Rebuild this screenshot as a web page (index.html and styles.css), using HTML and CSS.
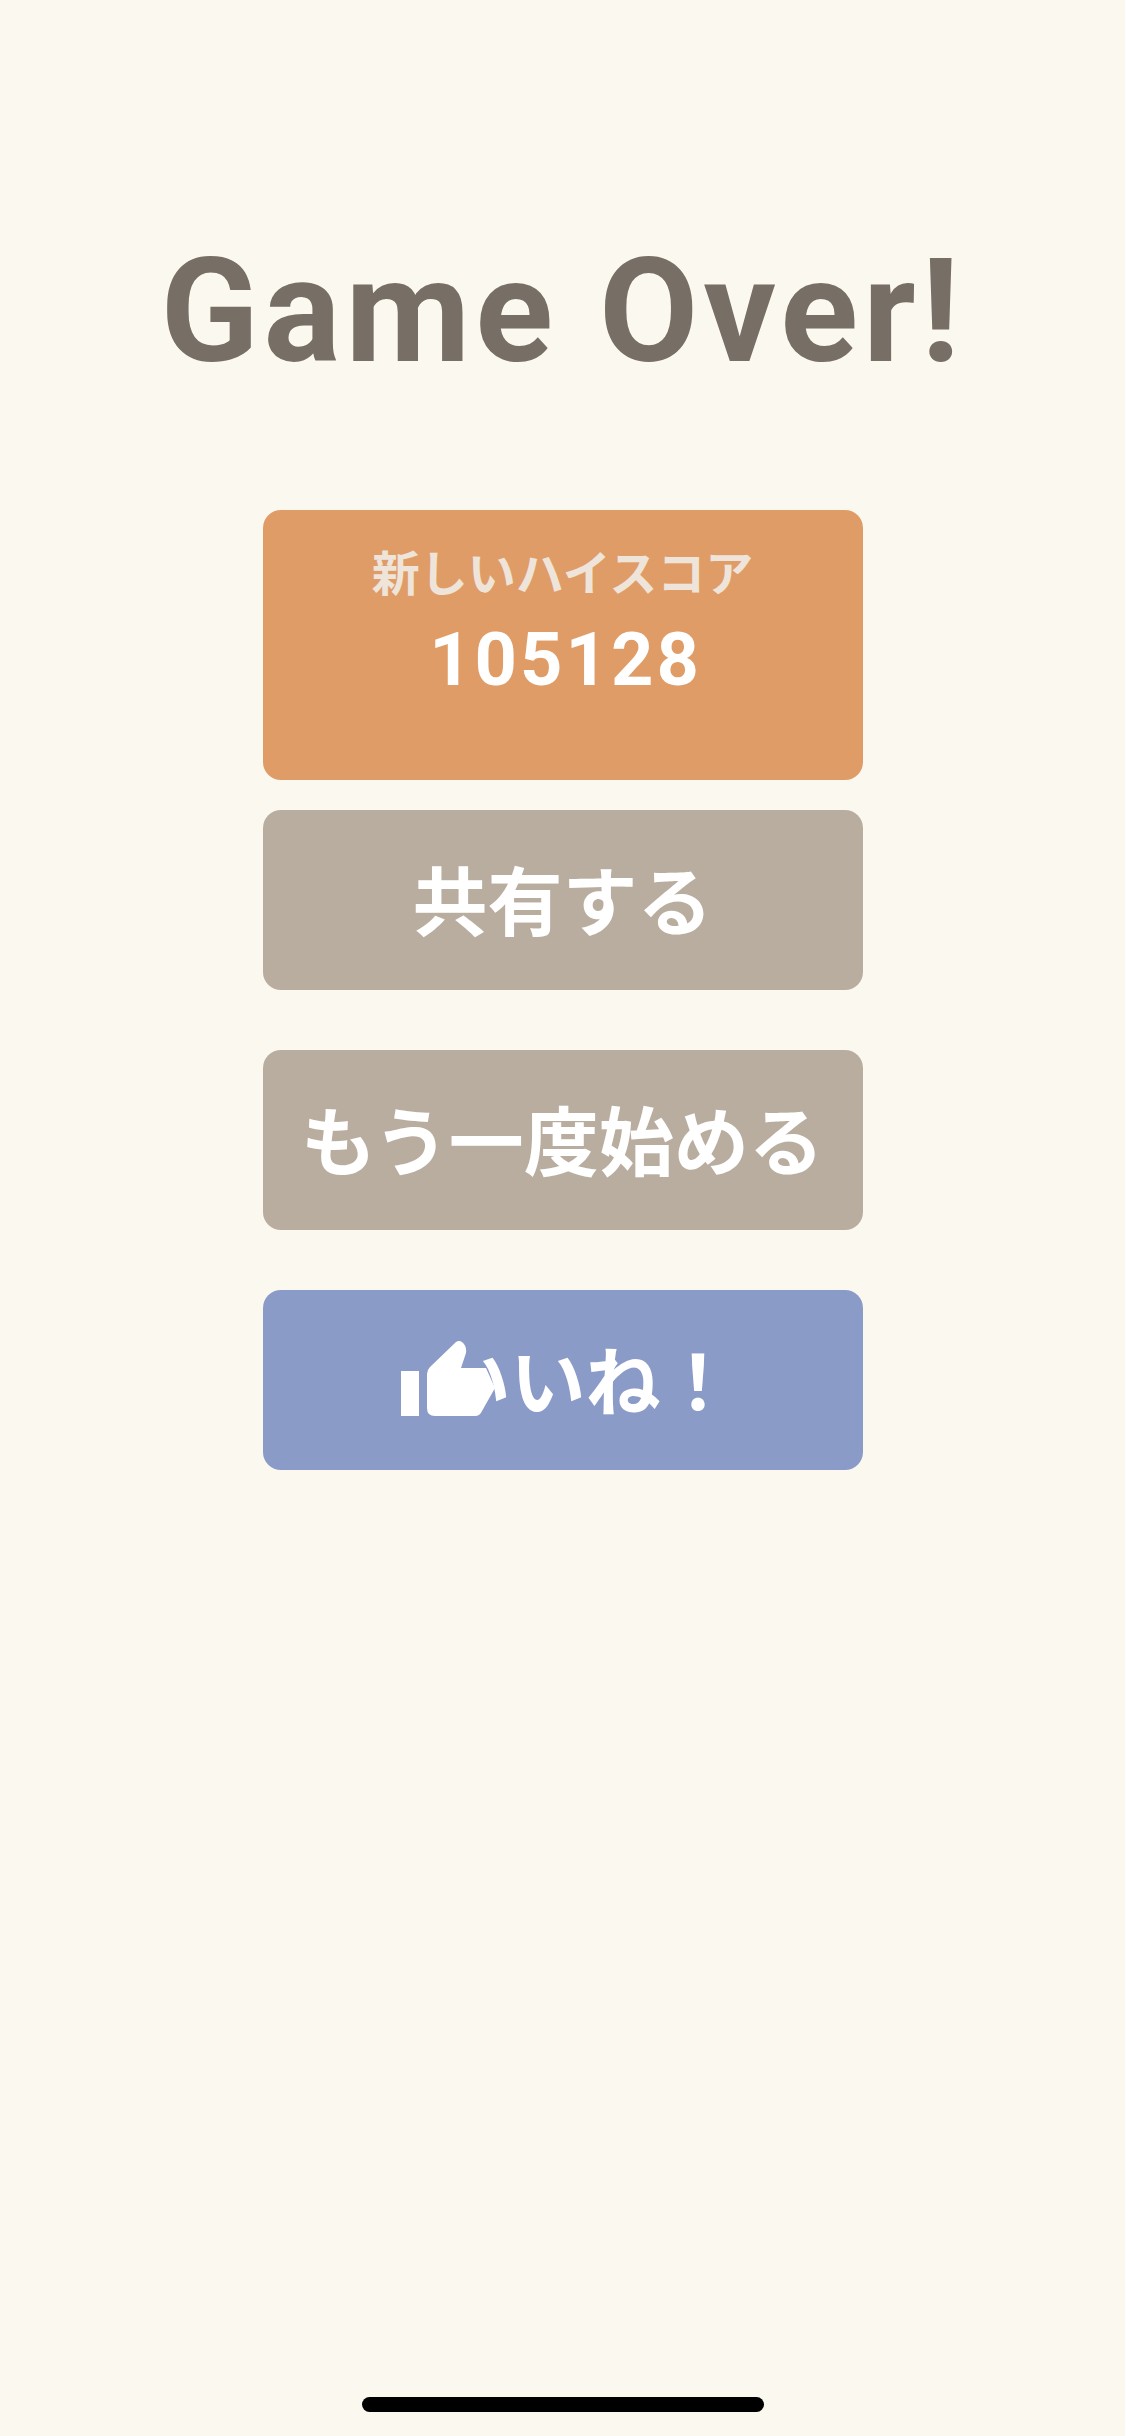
FILE: index.html
```html
<!DOCTYPE html>
<html lang="ja">
<head>
  <meta charset="UTF-8" />
  <meta name="viewport" content="width=device-width, initial-scale=1.0" />
  <title>Game Over</title>
  <link rel="stylesheet" href="styles.css">
</head>
<body>
  <main class="screen">
    <h1 class="title">Game Over!</h1>
    <div class="menu">
      <div class="score-card">
        <div class="score-label">新しいハイスコア</div>
        <div class="score-value">105128</div>
      </div>
      <button class="btn btn-gray">共有する</button>
      <button class="btn btn-gray">もう一度始める</button>
      <button class="btn btn-blue">
        <span class="like">
          <svg class="like-icon" viewBox="0 0 95 75" width="95" height="75" aria-hidden="true">
            <rect x="0" y="30" width="18" height="45" fill="#fff" />
            <path fill="#fff" d="M26 33 Q26 29 29 26 L55 1 Q58 -1 61 1 Q66 5 65 12 L60 27 L85 27 L94 47 L81 70 Q79 75 74 75 L34 75 Q26 75 26 67 Z" />
          </svg>
          いいね！
        </span>
      </button>
    </div>
  </main>
  <div class="home-bar"></div>
</body>
</html>
```

FILE: styles.css
```css
* { box-sizing: border-box; }
html, body { margin: 0; padding: 0; }
body {
  position: relative;
  height: 2436px;
  overflow: hidden;
  background-color: #fbf8f0;
  font-family: "Noto Sans CJK JP", "Roboto", sans-serif;
}
.screen {
  display: flex;
  flex-direction: column;
  align-items: center;
  padding-top: 226px;
}
.title {
  margin: 0;
  height: 284px;
  font-family: "Roboto", sans-serif;
  font-size: 144px;
  line-height: 172px;
  font-weight: 700;
  letter-spacing: 5px;
  color: #776e65;
  text-align: center;
}
.menu {
  display: flex;
  flex-direction: column;
  width: 600px;
}
.score-card {
  height: 270px;
  margin-bottom: 30px;
  padding-top: 24px;
  border-radius: 18px;
  background-color: #e09c66;
  text-align: center;
}
.score-label {
  font-size: 48px;
  line-height: 72px;
  font-weight: 700;
  color: #eee4da;
}
.score-value {
  padding-left: 6px;
  font-family: "Roboto", sans-serif;
  font-size: 74px;
  line-height: 108px;
  font-weight: 700;
  letter-spacing: 3px;
  color: #fff;
}
.btn {
  height: 180px;
  margin-bottom: 60px;
  padding: 0 0 6px;
  border: 0;
  border-radius: 18px;
  font-family: inherit;
  font-size: 75px;
  font-weight: 700;
  color: #fff;
  text-align: center;
}
.btn-gray { background-color: #b8ad9f; }
.btn-blue { background-color: #8a9bc8; }
.like {
  position: relative;
  display: inline-block;
  padding-left: 46px;
}
/* icon sits on top of the first character, same as the original */
.like-icon {
  position: absolute;
  left: 12px;
  top: 18px;
}
.home-bar {
  position: absolute;
  left: 362px;
  bottom: 24px;
  width: 402px;
  height: 15px;
  border-radius: 8px;
  background-color: #000;
}
```
